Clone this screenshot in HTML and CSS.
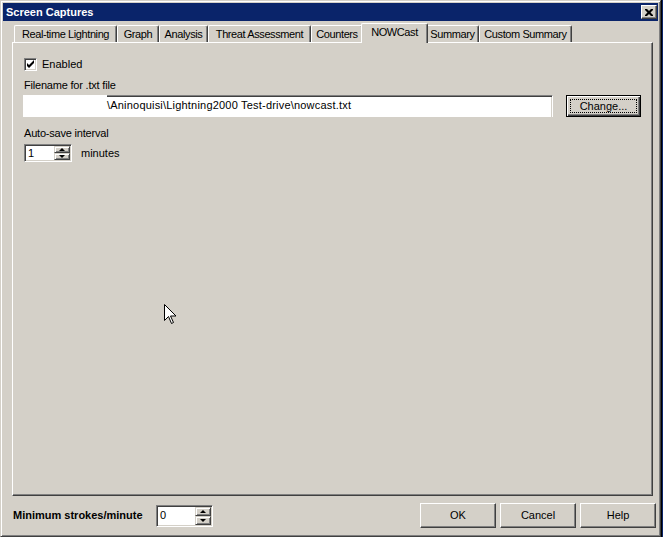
FILE: index.html
```html
<!DOCTYPE html>
<html>
<head>
<title>Screen Captures</title>
<meta charset="utf-8">
<link rel="stylesheet" href="styles.css">
</head>
<body>

<div class="screen">
<div class="window">
	<div class="titlebar">
		<span class="title">Screen Captures</span>
		<span class="closebtn"><svg width="8" height="7" viewBox="0 0 8 7"><path d="M0 0h2l2 2l2-2h2v1l-2.5 2.5l2.5 2.5v1h-2l-2-2l-2 2h-2v-1l2.5-2.5l-2.5-2.5z" fill="#000"/></svg></span>
	</div>

	<div class="dlgbody">
		<div class="tabs">
			<div class="tab t-rtl">Real-time Lightning</div>
			<div class="tab t-graph">Graph</div>
			<div class="tab t-analysis">Analysis</div>
			<div class="tab t-threat">Threat Assessment</div>
			<div class="tab t-counters">Counters</div>
			<div class="tab t-nowcast sel">NOWCast</div>
			<div class="tab t-summary">Summary</div>
			<div class="tab t-custom">Custom Summary</div>
		</div>

		<div class="panel">
			<label class="check">
				<span class="box"><svg width="9" height="9" viewBox="0 0 9 9"><path d="M1 3v3l2 2l5-5v-3l-5 5z" fill="#000"/></svg></span>
				<span>Enabled</span>
			</label>

			<div class="lbl first">Filename for .txt file</div>
			<div class="pathrow">
				<div class="pathbox">
					<div class="pathmask"></div>
					<div class="pathfield">\Aninoquisi\Lightning2000 Test-drive\nowcast.txt</div>
				</div>
				<div class="defbtn"><span class="focus">Change...</span></div>
			</div>

			<div class="lbl second">Auto-save interval</div>
			<div class="spinrow">
				<div class="spin spin1">
					<span class="spinval">1</span>
					<span class="spinbtns">
						<span class="spinbtn"><i class="up"></i></span>
						<span class="spinbtn"><i class="down"></i></span>
					</span>
				</div>
				<span class="unit">minutes</span>
			</div>
		</div>

		<div class="footer">
			<span class="minlbl">Minimum strokes/minute</span>
			<div class="spin spin2">
				<span class="spinval">0</span>
				<span class="spinbtns">
					<span class="spinbtn"><i class="up"></i></span>
					<span class="spinbtn"><i class="down"></i></span>
				</span>
			</div>
			<div class="btns">
				<div class="btn">OK</div>
				<div class="btn">Cancel</div>
				<div class="btn">Help</div>
			</div>
		</div>
	</div>
</div>
<div class="desk"></div>

<svg class="cursor" width="13" height="21" viewBox="0 0 13 21">
	<path d="M0.5 0.5v16l4-4l3 7l2-1l-3-6.5h5.5z" fill="#fff" stroke="#000" stroke-width="1"/>
</svg>
</div>

</body>
</html>
```

FILE: styles.css
```css
body {
	margin: 0;
	background: #0a246a;
	font-family: "Liberation Sans", Arial, sans-serif;
	font-size: 11px;
	line-height: 13px;
	color: #000;
}
.screen {
	position: relative;
	display: flex;
	width: 663px;
	height: 537px;
	overflow: hidden;
}
.window {
	box-sizing: border-box;
	width: 661px;
	height: 537px;
	padding: 2px;
	background: #d4d0c8;
	border: 1px solid;
	border-color: #d4d0c8 #404040 #404040 #d4d0c8;
	box-shadow: inset 1px 1px #fff, inset -1px -1px #808080;
}
.desk {
	flex: 1;
	background: #0a246a;
	border-left: 1px solid #000;
}

/* title bar */
.titlebar {
	display: flex;
	align-items: center;
	justify-content: space-between;
	height: 18px;
	padding: 0 1px 0 3px;
	background: #0a246a;
	color: #fff;
	font-weight: bold;
}
.closebtn {
	box-sizing: border-box;
	display: flex;
	align-items: center;
	justify-content: center;
	width: 16px;
	height: 14px;
	padding: 1px 1px 0 0;
	background: #d4d0c8;
	border: 1px solid;
	border-color: #fff #404040 #404040 #fff;
	box-shadow: inset -1px -1px #808080;
}

.dlgbody {
	padding: 2px 5px 0 9px;
}

/* tabs */
.tabs {
	display: flex;
	align-items: flex-end;
	height: 19px;
	padding-left: 2px;
}
.tab {
	box-sizing: border-box;
	height: 17px;
	padding-top: 2px;
	text-align: center;
	white-space: nowrap;
	letter-spacing: -0.4px;
	background: #d4d0c8;
	border-left: 1px solid #fff;
	border-top: 1px solid #fff;
	border-right: 1px solid #404040;
	border-radius: 2px 2px 0 0;
	box-shadow: inset -1px 0 #808080;
}
.tab.sel {
	position: relative;
	z-index: 1;
	height: 20px;
	margin: 0 -2px -1px;
}
.t-rtl { width: 103px; }
.t-graph { width: 42px; }
.t-analysis { width: 49px; }
.t-threat { width: 103px; }
.t-counters { width: 52px; }
.t-nowcast { width: 67px; }
.t-summary { width: 53px; }
.t-custom { width: 93px; }

/* tab page */
.panel {
	box-sizing: border-box;
	height: 454px;
	padding: 15px 0 0 11px;
	border: 1px solid;
	border-color: #fff #404040 #404040 #fff;
	box-shadow: inset -1px -1px #808080;
}
.check {
	display: flex;
	align-items: center;
	gap: 5px;
	height: 13px;
}
.box {
	box-sizing: border-box;
	display: flex;
	align-items: center;
	justify-content: center;
	width: 13px;
	height: 13px;
	background: #fff;
	border: 1px solid;
	border-color: #808080 #fff #fff #808080;
	box-shadow: inset 1px 1px #404040, inset -1px -1px #d4d0c8;
}
.lbl {
	letter-spacing: -0.2px;
}
.lbl.first {
	margin-top: 8px;
}
.lbl.second {
	margin-top: 10px;
}
.pathrow {
	display: flex;
	margin: 3px 0 0 -1px;
}
.pathbox {
	display: flex;
	width: 530px;
	height: 22px;
	background: #fff;
}
.pathmask {
	width: 84px;
}
.pathfield {
	flex: 1;
	padding-top: 3px;
	white-space: nowrap;
	letter-spacing: 0.2px;
	border-top: 1px solid #808080;
	border-right: 1px solid #fff;
	box-shadow: inset 0 1px #404040, inset -1px 0 #d4d0c8;
}
.defbtn {
	box-sizing: border-box;
	display: flex;
	width: 75px;
	height: 22px;
	margin-left: 13px;
	padding: 3px;
	border: 1px solid #000;
	box-shadow: inset 1px 1px #fff, inset -1px -1px #404040, inset -2px -2px #808080;
}
.focus {
	flex: 1;
	display: flex;
	align-items: center;
	justify-content: center;
	border: 1px dotted #000;
}

/* spin boxes */
.spinrow {
	display: flex;
	align-items: center;
	margin-top: 4px;
}
.spin {
	box-sizing: border-box;
	display: flex;
	background: #fff;
	border: 1px solid;
	border-color: #808080 #fff #fff #808080;
	box-shadow: inset 1px 1px #404040, inset -1px -1px #d4d0c8;
	padding: 1px 1px 1px 3px;
}
.spin1 {
	width: 48px;
	height: 18px;
}
.spin2 {
	width: 57px;
	height: 22px;
}
.spinval {
	flex: 1;
	display: flex;
	align-items: center;
}
.spinbtns {
	display: flex;
	flex-direction: column;
	width: 16px;
}
.spinbtn {
	box-sizing: border-box;
	flex: 1;
	display: flex;
	align-items: center;
	justify-content: center;
	background: #d4d0c8;
	border: 1px solid;
	border-color: #d4d0c8 #404040 #404040 #d4d0c8;
	box-shadow: inset 1px 1px #fff, inset -1px -1px #808080;
}
.up, .down {
	width: 0;
	height: 0;
	border-left: 3px solid transparent;
	border-right: 3px solid transparent;
}
.up {
	border-bottom: 3px solid #000;
}
.down {
	border-top: 3px solid #000;
}
.unit {
	margin-left: 9px;
}

/* bottom row */
.footer {
	display: flex;
	align-items: center;
	height: 25px;
	margin: 7px -3px 0 0;
	padding-left: 1px;
}
.minlbl {
	width: 143px;
	font-weight: bold;
}
.btns {
	display: flex;
	gap: 4px;
	margin-left: auto;
}
.btn {
	box-sizing: border-box;
	display: flex;
	align-items: center;
	justify-content: center;
	width: 76px;
	height: 25px;
	border: 1px solid;
	border-color: #fff #404040 #404040 #fff;
	box-shadow: inset -1px -1px #808080;
}

.cursor {
	position: absolute;
	left: 164px;
	top: 304px;
}
```
